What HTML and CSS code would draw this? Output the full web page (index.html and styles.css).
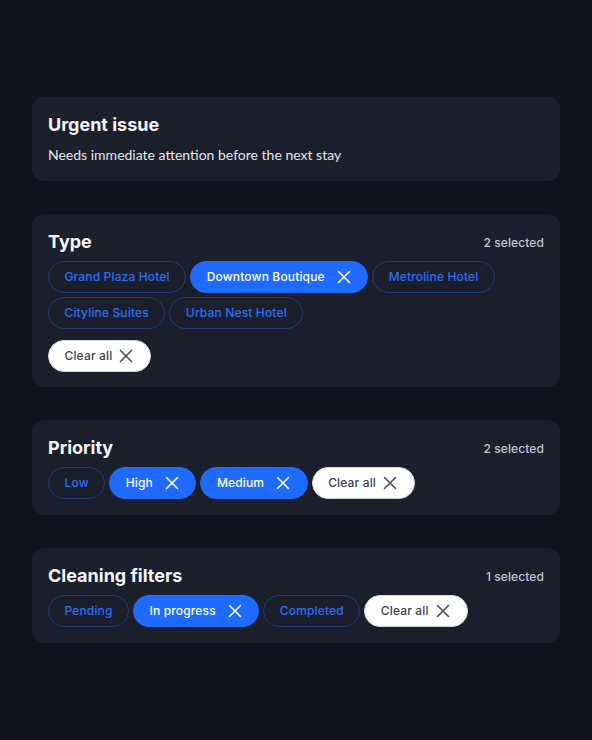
FILE: index.html
```html
<!DOCTYPE html>
<html lang="en">
<head>
<meta charset="utf-8">
<title>Filters</title>
<link rel="stylesheet" href="styles.css">
</head>
<body>
<main class="page">
  <section class="card">
    <h2 class="card-title">Urgent issue</h2>
    <p class="card-desc">Needs immediate attention before the next stay</p>
  </section>

  <section class="card card-type">
    <div class="card-head">
      <h2 class="card-title">Type</h2>
      <span class="count">2 selected</span>
    </div>
    <div class="chips">
      <button class="chip">Grand Plaza Hotel</button>
      <button class="chip chip-on">Downtown Boutique<svg class="x" viewBox="0 0 14 14"><path d="M1.5 1.5L12.5 12.5M12.5 1.5L1.5 12.5"/></svg></button>
      <button class="chip">Metroline Hotel</button>
      <button class="chip">Cityline Suites</button>
      <button class="chip">Urban Nest Hotel</button>
    </div>
    <div class="clear-row">
      <button class="chip chip-clear">Clear all<svg class="x" viewBox="0 0 14 14"><path d="M1.5 1.5L12.5 12.5M12.5 1.5L1.5 12.5"/></svg></button>
    </div>
  </section>

  <section class="card">
    <div class="card-head">
      <h2 class="card-title">Priority</h2>
      <span class="count">2 selected</span>
    </div>
    <div class="chips">
      <button class="chip">Low</button>
      <button class="chip chip-on">High<svg class="x" viewBox="0 0 14 14"><path d="M1.5 1.5L12.5 12.5M12.5 1.5L1.5 12.5"/></svg></button>
      <button class="chip chip-on">Medium<svg class="x" viewBox="0 0 14 14"><path d="M1.5 1.5L12.5 12.5M12.5 1.5L1.5 12.5"/></svg></button>
      <button class="chip chip-clear">Clear all<svg class="x" viewBox="0 0 14 14"><path d="M1.5 1.5L12.5 12.5M12.5 1.5L1.5 12.5"/></svg></button>
    </div>
  </section>

  <section class="card">
    <div class="card-head">
      <h2 class="card-title">Cleaning filters</h2>
      <span class="count">1 selected</span>
    </div>
    <div class="chips">
      <button class="chip">Pending</button>
      <button class="chip chip-on">In progress<svg class="x" viewBox="0 0 14 14"><path d="M1.5 1.5L12.5 12.5M12.5 1.5L1.5 12.5"/></svg></button>
      <button class="chip">Completed</button>
      <button class="chip chip-clear">Clear all<svg class="x" viewBox="0 0 14 14"><path d="M1.5 1.5L12.5 12.5M12.5 1.5L1.5 12.5"/></svg></button>
    </div>
  </section>
</main>
</body>
</html>
```

FILE: styles.css
```css
* { box-sizing: border-box; }

html, body {
  margin: 0;
  padding: 0;
  background: #10131b;
}

body {
  font-family: Inter, "Noto Sans", sans-serif;
  color: #f2f4f8;
  min-height: 740px;
}

.page {
  display: flex;
  flex-direction: column;
  gap: 33px;
  padding: 97px 32px 0 32px;
}

.card {
  background: #1b1f2c;
  border-radius: 12px;
  padding: 16px;
}

.card-type {
  padding-bottom: 15px;
}

.card-head {
  display: flex;
  align-items: center;
  justify-content: space-between;
  height: 24px;
  margin-bottom: 7px;
}

.card-title {
  margin: 0;
  font-size: 18px;
  line-height: 24px;
  font-weight: 700;
  color: #f4f6fa;
}

.card-desc {
  margin: 8px 0 0 0;
  font-family: Lato, "Noto Sans", sans-serif;
  font-size: 14px;
  line-height: 20px;
  color: #e4e7ee;
}

.count {
  font-size: 12px;
  font-weight: 500;
  letter-spacing: 0.1px;
  color: #c4c8d1;
}

.chips {
  display: flex;
  flex-wrap: wrap;
  gap: 4px;
}

.clear-row {
  display: flex;
  margin-top: 11px;
}

.chip {
  display: inline-flex;
  align-items: center;
  height: 32px;
  padding: 0 15.5px;
  border-radius: 16px;
  border: 1px solid #1e3d7c;
  background: transparent;
  color: #2d6ef7;
  font-family: Inter, "Noto Sans", sans-serif;
  font-size: 12px;
  font-weight: 500;
  letter-spacing: 0.15px;
  line-height: 1;
  cursor: pointer;
}

.chip-on {
  background: #1f6bff;
  border-color: #1f6bff;
  color: #ffffff;
  padding-right: 16.5px;
}

.chip-on .x {
  margin-left: 12px;
  stroke: #ffffff;
}

.chip-clear {
  background: #ffffff;
  border-color: #d3d6dd;
  color: #3d4250;
  padding-right: 17px;
}

.chip-clear .x {
  margin-left: 7px;
  stroke: #4a4f5c;
}

.x {
  width: 14px;
  height: 14px;
  fill: none;
  stroke-width: 1.6;
  stroke-linecap: round;
}
```
